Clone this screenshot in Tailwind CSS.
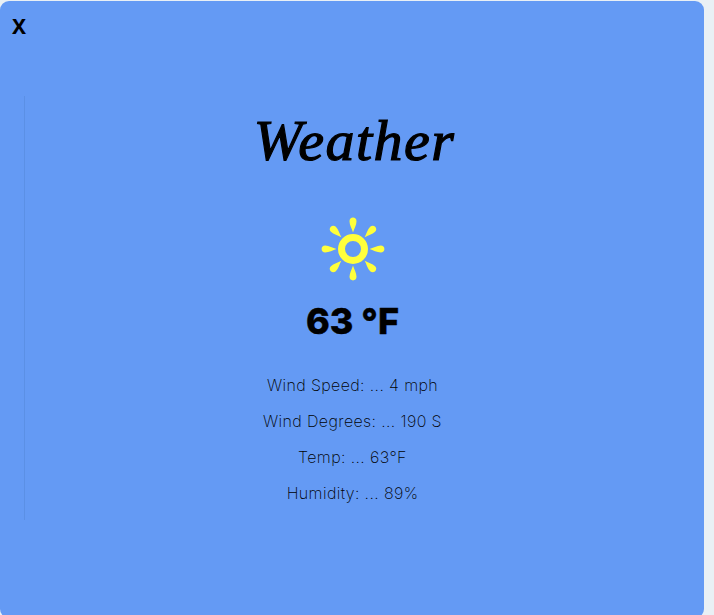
<!DOCTYPE html>
<html lang="en">
<head>
<meta charset="utf-8">
<title>Weather</title>
<script src="https://cdn.jsdelivr.net/npm/@tailwindcss/browser@4"></script>
</head>
<body class="h-[615px] overflow-hidden bg-[#e9f0f5] pt-px font-['Inter',sans-serif] text-black">
<main class="relative flex h-[617px] w-[704px] flex-col rounded-[9px] bg-[#649af4]">
  <button class="absolute left-3 top-[11px] font-['Noto_Sans',sans-serif] text-[21px] font-bold leading-7" aria-label="Close">X</button>
  <section class="ml-6 mt-[95px] flex h-[424px] w-[656px] flex-col items-center border-l border-[#5b90e5]">
    <h1 class="mt-[9px] flex h-[72px] items-center whitespace-nowrap pl-1 font-['Liberation_Serif',serif] text-[58px] font-normal italic leading-[72px] tracking-[1.5px] [-webkit-text-stroke:1.2px_black]">Weather</h1>
    <svg class="mt-[40px] h-[64px] w-[64px]" viewBox="-32 -32 64 64" fill="#ffff3b" aria-hidden="true">
      <defs><path id="ray" d="M0-16.5C-1-20-3.5-24-3.5-27.8C-3.5-30-2-31.4 0-31.4S3.5-30 3.5-27.8C3.5-24 1-20 0-16.5Z"/></defs>
      <circle r="11.5" fill="none" stroke="#ffff3b" stroke-width="7"/>
      <use href="#ray"/><use href="#ray" transform="rotate(45)"/><use href="#ray" transform="rotate(90)"/><use href="#ray" transform="rotate(135)"/><use href="#ray" transform="rotate(180)"/><use href="#ray" transform="rotate(225)"/><use href="#ray" transform="rotate(270)"/><use href="#ray" transform="rotate(315)"/>
    </svg>
    <h2 class="mt-[16px] text-[36px] font-extrabold leading-[48px] [-webkit-text-stroke:0.4px_black]">63 °F</h2>
    <div class="mt-[22px] text-center text-[16px] font-extralight leading-9 tracking-[0.38px]">
      <p>Wind Speed: ... 4 mph</p>
      <p>Wind Degrees: ... 190 S</p>
      <p>Temp: ... 63°F</p>
      <p>Humidity: ... 89%</p>
    </div>
  </section>
</main>
</body>
</html>
